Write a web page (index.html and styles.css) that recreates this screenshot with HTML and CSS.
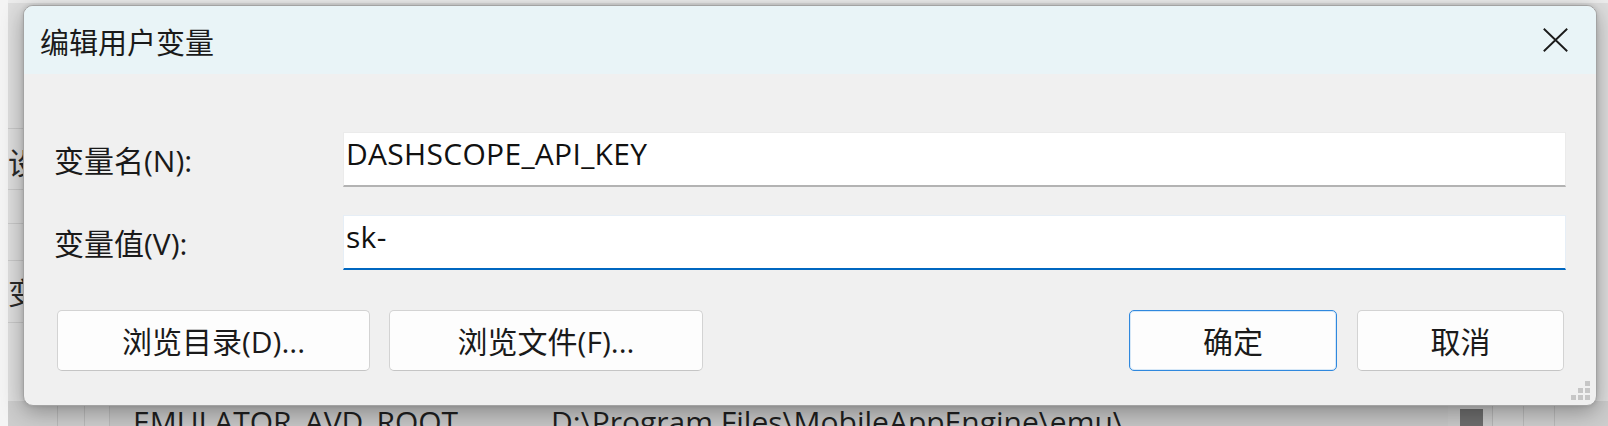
FILE: index.html
```html
<!DOCTYPE html>
<html lang="zh-CN">
<head>
<meta charset="utf-8">
<title>编辑用户变量</title>
<link rel="stylesheet" href="styles.css">
</head>
<body>
<div class="desk">
  <div class="behind">
    <div class="behind-left">
      <div class="brow r1"><span class="ghost">设</span></div>
      <div class="brow r2"></div>
      <div class="brow r3"></div>
      <div class="brow r4"><span class="ghost">变</span></div>
      <div class="brow r5"></div>
    </div>
    <div class="behind-bottom">
      <div class="bcol c1"></div>
      <div class="bcol c2"></div>
      <div class="bcol c3"></div>
      <div class="blist">
        <span class="cell name">EMULATOR_AVD_ROOT</span>
        <span class="cell value">D:\Program Files\MobileAppEngine\emu\</span>
      </div>
      <div class="bscroll"><span class="thumb"></span></div>
      <div class="bcol c4"></div>
      <div class="bcol c5"></div>
      <div class="bcol c6"></div>
    </div>
  </div>

  <div class="dialog">
    <div class="titlebar">
      <span class="title">编辑用户变量</span>
      <button class="close" aria-label="关闭">
        <svg width="25" height="24" viewBox="0 0 25 24"><path d="M0.8 0.8 L24.2 23.2 M24.2 0.8 L0.8 23.2" stroke="#1c1c1c" stroke-width="1.9" fill="none"/></svg>
      </button>
    </div>
    <div class="content">
      <div class="form">
        <label class="label">变量名(N):</label>
        <div class="field">DASHSCOPE_API_KEY</div>
        <label class="label">变量值(V):</label>
        <div class="field focus">sk-</div>
      </div>
      <div class="actions">
        <button class="btn wide">浏览目录(D)...</button>
        <button class="btn wide">浏览文件(F)...</button>
        <span class="spacer"></span>
        <button class="btn ok">确定</button>
        <button class="btn cancel">取消</button>
      </div>
    </div>
    <svg class="grip" width="20" height="20" viewBox="0 0 20 20">
      <rect x="14" y="0" width="5" height="5" fill="#c6c6c6"/>
      <rect x="7" y="7" width="5" height="5" fill="#c6c6c6"/>
      <rect x="14" y="7" width="5" height="5" fill="#c6c6c6"/>
      <rect x="0" y="14" width="5" height="5" fill="#c6c6c6"/>
      <rect x="7" y="14" width="5" height="5" fill="#c6c6c6"/>
      <rect x="14" y="14" width="5" height="5" fill="#c6c6c6"/>
    </svg>
  </div>
</div>
</body>
</html>
```

FILE: styles.css
```css
* { box-sizing: border-box; }

html, body {
  margin: 0;
  padding: 0;
}

body {
  width: 1608px;
  height: 426px;
  overflow: hidden;
  background: #f5f5f5;
  font-family: "Open Sans", "Noto Sans CJK SC", sans-serif;
  color: #1a1a1a;
}

.desk {
  position: relative;
  width: 1608px;
  height: 426px;
  overflow: hidden;
  background: #f4f4f4;
}

/* ---------- window underneath ---------- */
.behind {
  position: absolute;
  left: 8px;
  top: 0;
  right: 0;
  bottom: 0;
  background: #dedede;
  border-top: 3px solid #ececec;
}

.behind-left {
  display: flex;
  flex-direction: column;
  padding-top: 125px;
  width: 60px;
}

.brow {
  border-top: 1px solid #c9c9c9;
  overflow: hidden;
}
.brow.r1 { height: 61px; }
.brow.r2 { height: 34px; }
.brow.r3 { height: 37px; }
.brow.r4 { height: 62px; }
.brow.r5 { height: 60px; }

.ghost {
  display: block;
  font-family: "Noto Sans CJK SC", sans-serif;
  font-size: 30px;
  line-height: 40px;
  color: #2a2a2a;
  padding-top: 12px;
}
.brow.r4 .ghost { padding-top: 10px; }

.behind-bottom {
  position: absolute;
  left: 0;
  right: 0;
  top: 398px;
  height: 40px;
  display: flex;
  background: #cdcdcd;
}

.bcol {
  border-right: 1px solid #b9b9b9;
}
.bcol.c1 { width: 50px; }
.bcol.c2 { width: 27px; }
.bcol.c3 { width: 25px; }
.bcol.c4 { width: 31px; }
.bcol.c5 { width: 31px; }
.bcol.c6 { flex: 1; border-right: 0; }

.blist {
  width: 1338px;
  display: flex;
  background: #c6c6c6;
  padding-left: 23px;
  padding-top: 1px;
  font-size: 30px;
  line-height: 40px;
  color: #1e1e1e;
  white-space: nowrap;
  overflow: hidden;
}

.cell.name { width: 418px; flex: none; }

.bscroll {
  width: 45px;
  padding-left: 12px;
  border-right: 1px solid #b5b5b5;
  background: #c9c9c9;
}
.thumb {
  display: block;
  width: 23px;
  height: 40px;
  margin-top: 8px;
  background: #6d6d6d;
}

/* ---------- dialog ---------- */
.dialog {
  position: absolute;
  left: 23px;
  top: 5px;
  width: 1574px;
  height: 401px;
  border: 1px solid #a3a3a3;
  border-radius: 10px;
  background: #f0f0f0;
  overflow: hidden;
  box-shadow: 0 6px 22px rgba(0, 0, 0, 0.32), 0 0 4px rgba(0, 0, 0, 0.12);
}

.titlebar {
  height: 68px;
  display: flex;
  align-items: center;
  background: #e9f4f7;
  padding-left: 16px;
}

.title {
  flex: 1;
  font-family: "Noto Sans CJK SC", sans-serif;
  font-size: 29px;
  line-height: 40px;
  color: #1a1a1a;
  padding-top: 2px;
}

.close {
  width: 81px;
  height: 68px;
  border: 0;
  background: transparent;
  padding: 0;
  display: flex;
  align-items: center;
  justify-content: center;
}
.close svg { display: block; }

.content {
  padding: 58px 30px 0 30px;
}

.form {
  display: grid;
  grid-template-columns: 289px 1fr;
  row-gap: 28px;
  align-items: center;
}

.label {
  font-size: 30px;
  line-height: 40px;
  color: #1a1a1a;
  padding-top: 2px;
}

.field {
  height: 55px;
  background: #ffffff;
  border: 1px solid #ebebeb;
  border-bottom: 2px solid #b3b3b3;
  padding: 0 2px;
  font-size: 30px;
  line-height: 41px;
  letter-spacing: 0.3px;
  color: #111111;
  white-space: nowrap;
}

.field.focus {
  border-color: #e6eef6;
  border-bottom: 2px solid #0067c0;
}

.actions {
  display: flex;
  gap: 19px;
  margin: 40px 2px 0 3px;
}

.spacer { flex: 1; }

.btn {
  height: 61px;
  border: 1px solid #d3d3d3;
  border-bottom-color: #c5c5c5;
  border-radius: 5px;
  background: #fdfdfd;
  font-family: "Open Sans", "Noto Sans CJK SC", sans-serif;
  font-size: 30px;
  line-height: 40px;
  color: #1a1a1a;
  padding: 2px 0 0 0;
}

.btn.wide { width: 313px; }
.btn.wide + .btn.wide { width: 314px; }

.btn.ok {
  width: 208px;
  border: 1px solid #2f88de;
  box-shadow: inset 0 0 0 1px rgba(47, 136, 222, 0.18);
}

.btn.cancel { width: 207px; margin-left: 1px; }

.grip {
  position: absolute;
  right: 5px;
  bottom: 4px;
}
```
